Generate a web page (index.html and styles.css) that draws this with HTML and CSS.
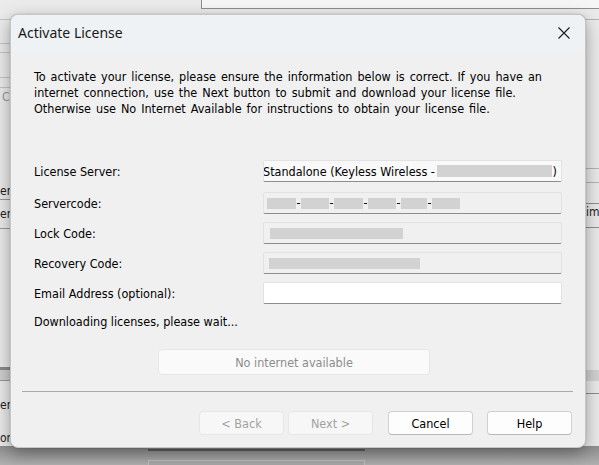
FILE: index.html
```html
<!DOCTYPE html>
<html>
<head>
<meta charset="utf-8">
<link rel="stylesheet" href="styles.css">
<title>Activate License</title>
</head>
<body>
<div class="desktop">
  <div class="bg-top-panel"></div>
  <div class="bg-right-line bg-rl1"></div>
  <div class="bg-left-line bg-ll1"></div>
  <div class="bg-left-line bg-ll2"></div>
  <div class="bg-left-line bg-ll3"></div>
  <div class="bg-left-line bg-ll4"></div>
  <div class="bg-left-line bg-ll5"></div>
  <div class="bg-left-text bg-lt1">C</div>
  <div class="bg-left-text bg-lt2">er</div>
  <div class="bg-left-line bg-ll6"></div>
  <div class="bg-left-text bg-lt3">en</div>
  <div class="bg-left-line bg-ll7"></div>
  <div class="bg-left-band"></div>
  <div class="bg-left-text bg-lt4">er</div>
  <div class="bg-left-text bg-lt5">om</div>
  <div class="bg-right-line bg-rl2"></div>
  <div class="bg-right-line bg-rl3"></div>
  <div class="bg-right-line bg-rl4"></div>
  <div class="bg-right-text">im</div>
  <div class="bg-right-line bg-rl5"></div>
  <div class="bg-right-band"></div>
  <div class="bg-right-line bg-rl6"></div>
  <div class="bg-bottom">
    <div class="bg-bottom-line"></div>
    <div class="bg-bottom-box"></div>
  </div>

  <div class="dialog">
    <div class="titlebar">
      <span class="title">Activate License</span>
      <span class="close">
        <svg width="12" height="12" viewBox="0 0 12 12"><path d="M0.5 0.5 L11.5 11.5 M11.5 0.5 L0.5 11.5" stroke="#1b1b1b" stroke-width="1.1" fill="none"/></svg>
      </span>
    </div>
    <div class="body">
      <p class="intro">To activate your license, please ensure the information below is correct. If you have an<br>internet connection, use the Next button to submit and download your license file.<br>Otherwise use No Internet Available for instructions to obtain your license file.</p>

      <div class="form">
        <div class="label first-label">License Server:</div>
        <div class="field field-combo first"><span class="clip">Standalone (Keyless Wireless - </span><span class="redact r-server"></span><span class="paren">)</span></div>

        <div class="label">Servercode:</div>
        <div class="field">
          <span class="redact r-c1"></span><span class="dash">-</span>
          <span class="redact r-c2"></span><span class="dash">-</span>
          <span class="redact r-c3"></span><span class="dash">-</span>
          <span class="redact r-c4"></span><span class="dash">-</span>
          <span class="redact r-c5"></span><span class="dash">-</span>
          <span class="redact r-c6"></span>
        </div>

        <div class="label">Lock Code:</div>
        <div class="field"><span class="redact r-lock"></span></div>

        <div class="label">Recovery Code:</div>
        <div class="field"><span class="redact r-rec"></span></div>

        <div class="label">Email Address (optional):</div>
        <div class="field field-edit"></div>
      </div>

      <div class="status">Downloading licenses, please wait...</div>

      <div class="nointernet-row">
        <button class="btn btn-wide" disabled>No internet available</button>
      </div>
    </div>
    <div class="separator"></div>
    <div class="buttons">
      <button class="btn btn-disabled" disabled>&lt; Back</button>
      <button class="btn btn-disabled btn-next" disabled>Next &gt;</button>
      <button class="btn btn-normal btn-cancel">Cancel</button>
      <button class="btn btn-normal btn-help">Help</button>
    </div>
  </div>
</div>
</body>
</html>
```

FILE: styles.css
```css
* { box-sizing: border-box; }
html, body { margin: 0; padding: 0; }
body {
  width: 599px;
  height: 465px;
  overflow: hidden;
  font-family: "DejaVu Sans Condensed", "DejaVu Sans", sans-serif;
  font-size: 12.5px;
  color: #000;
}
.desktop {
  position: relative;
  width: 599px;
  height: 465px;
  background: #ebebeb;
  overflow: hidden;
}

/* ---------- background application (behind dialog) ---------- */
.bg-top-panel {
  position: absolute;
  left: 201px; top: -1px;
  width: 400px; height: 10px;
  background: #f6f6f6;
  border-left: 1px solid #8e8e8e;
  border-bottom: 1px solid #8e8e8e;
}
.bg-left-line {
  position: absolute;
  left: 0; width: 12px; height: 1px;
  background: #c4c4c4;
}
.bg-ll1 { top: 19px; }
.bg-ll2 { top: 43px; }
.bg-ll3 { top: 52px; }
.bg-ll4 { top: 77px; }
.bg-ll5 { top: 87px; }
.bg-ll6 { top: 199px; background: #9a9a9a; }
.bg-ll7 { top: 228px; background: #9a9a9a; }
.bg-left-text {
  position: absolute;
  left: 0;
  font-family: "DejaVu Sans Condensed", sans-serif;
  font-size: 12px;
  line-height: 14px;
  color: #222;
}
.bg-lt1 { left: 2px; top: 90px; color: #999; }
.bg-lt2 { top: 184px; }
.bg-lt3 { top: 207px; }
.bg-lt4 { top: 398px; }
.bg-lt5 { top: 431px; }
.bg-left-band {
  position: absolute;
  left: 0; top: 367px; width: 12px; height: 14px;
  background: #cfcfcf;
  border-top: 3px solid #8a8a8a;
  border-bottom: 1px solid #9a9a9a;
}
.bg-right-line {
  position: absolute;
  left: 584px; width: 16px; height: 1px;
  background: #b4b4b4;
}
.bg-rl1 { top: 19px; }
.bg-rl2 { top: 168px; }
.bg-rl3 { top: 182px; }
.bg-rl4 { top: 203px; background: #8e8e8e; }
.bg-rl5 { top: 227px; background: #8e8e8e; }
.bg-rl6 { top: 393px; background: #8e8e8e; }
.bg-right-text {
  position: absolute;
  left: 586px; top: 205px;
  font-size: 12px; line-height: 14px; color: #222;
}
.bg-right-band {
  position: absolute;
  left: 584px; top: 370px; width: 16px; height: 11px;
  background: #d2d2d2;
}
.bg-bottom {
  position: absolute;
  left: 0; top: 446px;
  width: 599px; height: 20px;
  background: linear-gradient(#8f8f8f, #b2b2b2);
}
.bg-bottom-line {
  position: absolute;
  left: 148px; top: 3px;
  width: 217px; height: 2px;
  background: #5f5f5f;
}
.bg-bottom-box {
  position: absolute;
  left: 148px; top: 14px;
  width: 217px; height: 10px;
  border: 1px solid #c0c0c0;
  background: #a8a8a8;
}

/* ---------- dialog ---------- */
.dialog {
  position: absolute;
  left: 10px; top: 14px;
  width: 576px; height: 434px;
  background: #f0f0f0;
  border: 1px solid #c6c6c6;
  border-radius: 8px;
  overflow: hidden;
  box-shadow: 0 6px 18px rgba(0,0,0,0.35), 0 0 2px rgba(0,0,0,0.2);
  display: flex;
  flex-direction: column;
}
.titlebar {
  height: 36px;
  flex: none;
  background: #eef2f5;
  display: flex;
  align-items: center;
  justify-content: space-between;
  padding: 0 15px 1px 7px;
}
.title {
  font-family: "Noto Sans", "Open Sans", sans-serif;
  font-size: 14px;
  color: #1a1a1a;
}
.close { display: flex; width: 12px; height: 12px; }

.body {
  flex: 1;
  padding: 18px 0 0 23px;
}
.intro {
  margin: 0;
  line-height: 16px;
  white-space: nowrap;
  word-spacing: 1.4px;
}
.form {
  margin-top: 43px;
  display: grid;
  grid-template-columns: 229px 299px;
  row-gap: 8px;
}
.label {
  display: flex;
  align-items: center;
  height: 22px;
}
.field {
  height: 22px;
  display: flex;
  align-items: center;
  padding-left: 5px;
  background: #f0f0f0;
  border: 1px solid #e2e2e2;
  border-bottom: 1px solid #8d8d8d;
  border-radius: 2px;
  overflow: hidden;
  white-space: nowrap;
}
.first, .first-label { margin-bottom: 2px; }
.field-combo {
  background: #f9f9f9;
  padding-left: 1px;
  padding-right: 4px;
}
.field-edit { background: #ffffff; }
.clip { margin-left: -2px; flex: none; }
.paren { margin-left: 1px; flex: none; }
.redact {
  display: inline-block;
  height: 11px;
  background: #d2d2d2;
  flex: none;
}
.r-server { flex: 1; height: 12px; margin-left: 2px; }
.r-c1 { width: 29px; }
.r-c2 { width: 28px; }
.r-c3 { width: 29px; }
.r-c4 { width: 28px; }
.r-c5 { width: 26px; }
.r-c6 { width: 28px; }
.dash {
  display: inline-block;
  width: 5px;
  text-align: center;
  font-size: 12px;
  line-height: 11px;
}
.field .redact.r-c1 { margin-left: -2px; }
.r-lock { width: 133px; margin-left: 1px; }
.r-rec { width: 151px; }

.status {
  margin-top: 10px;
  line-height: 16px;
}
.nointernet-row {
  margin-top: 19px;
  padding-left: 124px;
}
.btn {
  font-family: "DejaVu Sans Condensed", "DejaVu Sans", sans-serif;
  font-size: 12.5px;
  border-radius: 4px;
  padding: 0;
  margin: 0;
  display: flex;
  align-items: center;
  justify-content: center;
}
.btn-wide {
  width: 272px;
  height: 26px;
  background: #fafafa;
  border: 1px solid #e6e6e6;
  color: #8c8c8c;
}
.separator {
  flex: none;
  height: 1px;
  background: #a9a9a9;
  margin: 0 12px 0 11px;
}
.buttons {
  flex: none;
  display: flex;
  justify-content: flex-end;
  padding: 19px 13px 12px 0;
  gap: 4px;
}
.buttons .btn { width: 85px; height: 24px; }
.btn-disabled {
  background: #f7f7f7;
  border: 1px solid #e6e6e6;
  color: #a2a2a2;
}
.btn-normal {
  background: #fdfdfd;
  border: 1px solid #d0d0d0;
  border-bottom-color: #b8b8b8;
  color: #000;
}
.btn-cancel { margin-left: 11px; width: 86px; }
.btn-help { margin-left: 10px; }
```
